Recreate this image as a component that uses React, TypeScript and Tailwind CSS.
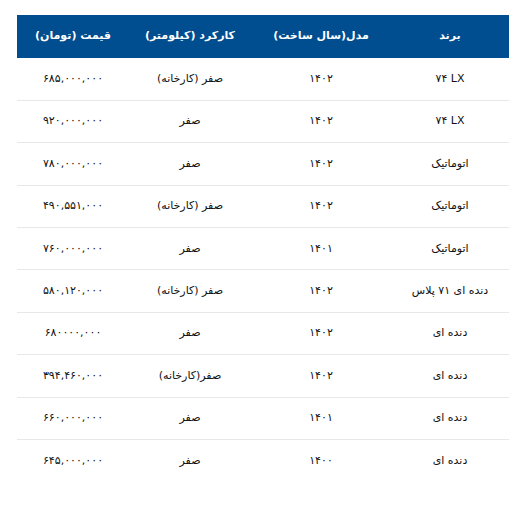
const head = ['برند', 'مدل(سال ساخت)', 'کارکرد (کیلومتر)', 'قیمت (تومان)']

const rows = [
  ['۷۴ LX', '۱۴۰۲', 'صفر (کارخانه)', '۶۸۵,۰۰۰,۰۰۰'],
  ['۷۴ LX', '۱۴۰۲', 'صفر', '۹۲۰,۰۰۰,۰۰۰'],
  ['اتوماتیک', '۱۴۰۲', 'صفر', '۷۸۰,۰۰۰,۰۰۰'],
  ['اتوماتیک', '۱۴۰۲', 'صفر (کارخانه)', '۴۹۰,۵۵۱,۰۰۰'],
  ['اتوماتیک', '۱۴۰۱', 'صفر', '۷۶۰,۰۰۰,۰۰۰'],
  ['دنده ای ۷۱ پلاس', '۱۴۰۲', 'صفر (کارخانه)', '۵۸۰,۱۲۰,۰۰۰'],
  ['دنده ای', '۱۴۰۲', 'صفر', '۶۸۰۰۰۰,۰۰۰'],
  ['دنده ای', '۱۴۰۲', 'صفر(کارخانه)', '۳۹۴,۴۶۰,۰۰۰'],
  ['دنده ای', '۱۴۰۱', 'صفر', '۶۶۰,۰۰۰,۰۰۰'],
  ['دنده ای', '۱۴۰۰', 'صفر', '۶۴۵,۰۰۰,۰۰۰'],
]

const widths = ['w-[118px]', 'w-[140px]', 'w-[122px]', 'w-[112px]']

export default function App() {
  return (
    <div className="min-h-[511px] bg-white pt-[15px] pl-[17px] font-['DejaVu_Sans',sans-serif]">
      <table dir="rtl" className="w-[492px] table-fixed border-collapse">
        <thead>
          <tr className="h-[43px] bg-[#004d8f]">
            {head.map((h, i) => (
              <th key={h} className={`${widths[i]} text-center text-[11px] font-bold text-white`}>
                {h}
              </th>
            ))}
          </tr>
        </thead>
        <tbody>
          {rows.map((r, i) => (
            <tr key={i} className={`h-[42.4px] ${i < rows.length - 1 ? 'border-b border-[#e8e8e8]' : ''}`}>
              {r.map((c, j) => (
                <td key={j} className="text-center text-[11px] text-[#111]">
                  {/* برند لاتین چپ‌به‌راست نمایش داده می‌شود */}
                  {j === 0 && c.includes('LX') ? <span dir="ltr">{c}</span> : c}
                </td>
              ))}
            </tr>
          ))}
        </tbody>
      </table>
    </div>
  )
}
